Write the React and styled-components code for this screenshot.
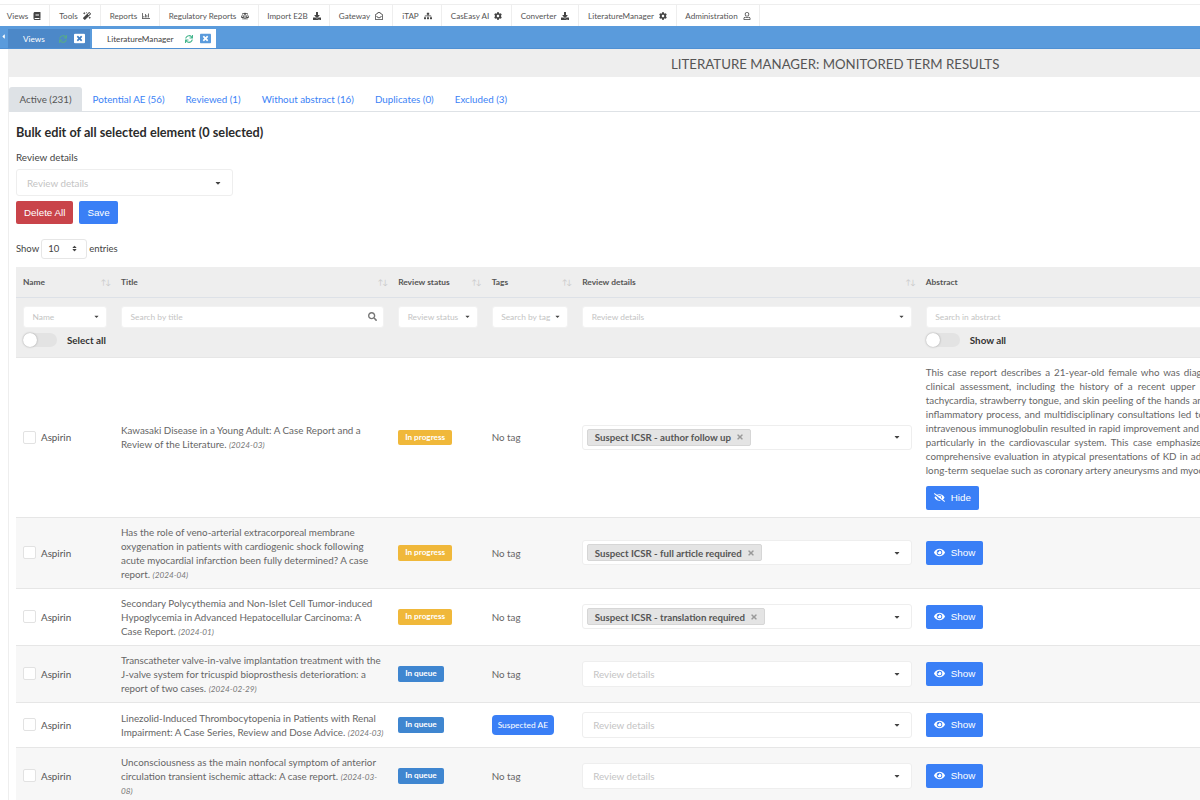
import React from "react";
import styled, { createGlobalStyle } from "styled-components";
import {
  FaBook,
  FaMagic,
  FaRegChartBar,
  FaBalanceScale,
  FaDownload,
  FaRegEnvelopeOpen,
  FaSitemap,
  FaCog,
  FaRegUser,
  FaSync,
  FaWindowClose,
  FaCaretDown,
  FaCaretLeft,
  FaSort,
  FaSearch,
  FaEye,
  FaEyeSlash,
  FaTimes,
} from "react-icons/fa";

const navItems = [
  { label: "Views", Icon: FaBook, width: 50 },
  { label: "Tools", Icon: FaMagic, width: 51 },
  { label: "Reports", Icon: FaRegChartBar, width: 59 },
  { label: "Regulatory Reports", Icon: FaBalanceScale, width: 99 },
  { label: "Import E2B", Icon: FaDownload, width: 71 },
  { label: "Gateway", Icon: FaRegEnvelopeOpen, width: 63 },
  { label: "iTAP", Icon: FaSitemap, width: 49 },
  { label: "CasEasy AI", Icon: FaCog, width: 70 },
  { label: "Converter", Icon: FaDownload, width: 67 },
  { label: "LiteratureManager", Icon: FaCog, width: 98 },
  { label: "Administration", Icon: FaRegUser, width: 83 },
];

const tabs = [
  { label: "Active (231)", active: true },
  { label: "Potential AE (56)" },
  { label: "Reviewed (1)" },
  { label: "Without abstract (16)" },
  { label: "Duplicates (0)" },
  { label: "Excluded (3)" },
];

const columns = [
  { label: "Name", width: 98, sort: true },
  { label: "Title", width: 277, sort: true },
  { label: "Review status", width: 93.5, sort: true },
  { label: "Tags", width: 90.5, sort: true },
  { label: "Review details", width: 343.5, sort: true },
  { label: "Abstract", width: 520 },
];

// the source text is justified, the spread is the extra word spacing of each line
const abstractLines = [
  { text: "This case report describes a 21-year-old female who was diagnosed with Kawasaki disease", spread: 1.4 },
  { text: "clinical assessment, including the history of a recent upper respiratory tract infection", spread: 2.6 },
  { text: "tachycardia, strawberry tongue, and skin peeling of the hands and feet. Laboratory tests", spread: 0.2 },
  { text: "inflammatory process, and multidisciplinary consultations led to the diagnosis. Aspirin and", spread: 1.1 },
  { text: "intravenous immunoglobulin resulted in rapid improvement and no lasting complications,", spread: 0.3 },
  { text: "particularly in the cardiovascular system. This case emphasizes the importance of a", spread: 1.9 },
  { text: "comprehensive evaluation in atypical presentations of KD in adults, to help prevent", spread: 0.7 },
  { text: "long-term sequelae such as coronary artery aneurysms and myocardial infarction.", spread: 0 },
];

const rows = [
  {
    title: "Kawasaki Disease in a Young Adult: A Case Report and a Review of the Literature.",
    date: "(2024-03)",
    status: "progress",
    detail: "Suspect ICSR - author follow up",
    open: true,
  },
  {
    title:
      "Has the role of veno-arterial extracorporeal membrane oxygenation in patients with cardiogenic shock following acute myocardial infarction been fully determined? A case report.",
    date: "(2024-04)",
    status: "progress",
    detail: "Suspect ICSR - full article required",
  },
  {
    title:
      "Secondary Polycythemia and Non-Islet Cell Tumor-induced Hypoglycemia in Advanced Hepatocellular Carcinoma: A Case Report.",
    date: "(2024-01)",
    status: "progress",
    detail: "Suspect ICSR - translation required",
  },
  {
    title:
      "Transcatheter valve-in-valve implantation treatment with the J-valve system for tricuspid bioprosthesis deterioration: a report of two cases.",
    date: "(2024-02-29)",
    status: "queue",
  },
  {
    title:
      "Linezolid-Induced Thrombocytopenia in Patients with Renal Impairment: A Case Series, Review and Dose Advice.",
    date: "(2024-03)",
    status: "queue",
    tag: "Suspected AE",
  },
  {
    title:
      "Unconsciousness as the main nonfocal symptom of anterior circulation transient ischemic attack: A case report.",
    date: "(2024-03-08)",
    status: "queue",
  },
];

function App() {
  return (
    <>
      <GlobalStyle />
      <Page>
        <TopNav>
          {navItems.map(({ label, Icon, width }) => (
            <NavItem key={label} $width={width}>
              {label}
              <Icon />
            </NavItem>
          ))}
        </TopNav>
        <TabBar>
          <Collapse>
            <FaCaretLeft />
          </Collapse>
          <WindowTab>
            Views
            <SyncIcon $dim />
            <CloseIcon $light />
          </WindowTab>
          <WindowTab $active>
            LiteratureManager
            <SyncIcon />
            <CloseIcon />
          </WindowTab>
        </TabBar>
        <Content>
          <TitleBand>LITERATURE MANAGER: MONITORED TERM RESULTS</TitleBand>
          <Tabs>
            {tabs.map((tab) => (
              <Tab key={tab.label} $active={tab.active}>
                {tab.label}
              </Tab>
            ))}
          </Tabs>
          <Body>
            <BulkTitle>Bulk edit of all selected element (0 selected)</BulkTitle>
            <FieldLabel>Review details</FieldLabel>
            <BulkSelect>
              Review details
              <FaCaretDown />
            </BulkSelect>
            <ButtonRow>
              <FormButton $danger>Delete All</FormButton>
              <FormButton>Save</FormButton>
            </ButtonRow>
            <EntriesRow>
              Show
              <EntriesSelect>
                10
                <FaSort />
              </EntriesSelect>
              entries
            </EntriesRow>
            <ResultsTable>
              <colgroup>
                {columns.map((col) => (
                  <col key={col.label} style={{ width: col.width }} />
                ))}
              </colgroup>
              <thead>
                <tr>
                  {columns.map((col) => (
                    <HeadCell key={col.label}>
                      {col.label}
                      {col.sort && <SortArrows>↑↓</SortArrows>}
                    </HeadCell>
                  ))}
                </tr>
                <tr>
                  <FilterCell>
                    <FilterBox>
                      Name
                      <FaCaretDown />
                    </FilterBox>
                    <ToggleRow>
                      <Toggle />
                      Select all
                    </ToggleRow>
                  </FilterCell>
                  <FilterCell>
                    <FilterBox $search>
                      Search by title
                      <FaSearch />
                    </FilterBox>
                  </FilterCell>
                  <FilterCell>
                    <FilterBox>
                      Review status
                      <FaCaretDown />
                    </FilterBox>
                  </FilterCell>
                  <FilterCell>
                    <FilterBox>
                      Search by tag
                      <FaCaretDown />
                    </FilterBox>
                  </FilterCell>
                  <FilterCell>
                    <FilterBox>
                      Review details
                      <FaCaretDown />
                    </FilterBox>
                  </FilterCell>
                  <FilterCell>
                    <FilterBox>Search in abstract</FilterBox>
                    <ToggleRow>
                      <Toggle />
                      Show all
                    </ToggleRow>
                  </FilterCell>
                </tr>
              </thead>
              <tbody>
                {rows.map((row, index) => (
                  <Row key={row.title} $shaded={index % 2 === 1}>
                    <Cell>
                      <NameWrap>
                        <Check />
                        Aspirin
                      </NameWrap>
                    </Cell>
                    <Cell>
                      {row.title} <DateText>{row.date}</DateText>
                    </Cell>
                    <Cell>
                      <StatusBadge $status={row.status}>
                        {row.status === "progress" ? "In progress" : "In queue"}
                      </StatusBadge>
                    </Cell>
                    <Cell>{row.tag ? <TagBadge>{row.tag}</TagBadge> : <NoTag>No tag</NoTag>}</Cell>
                    <Cell>
                      <DetailSelect $filled={!!row.detail}>
                        {row.detail ? (
                          <Chip>
                            {row.detail}
                            <FaTimes />
                          </Chip>
                        ) : (
                          "Review details"
                        )}
                        <FaCaretDown />
                      </DetailSelect>
                    </Cell>
                    <Cell>
                      {row.open && (
                        <AbstractText>
                          {abstractLines.map((line) => (
                            <AbstractLine key={line.text} $spread={line.spread}>
                              {line.text}
                            </AbstractLine>
                          ))}
                        </AbstractText>
                      )}
                      <EyeButton>
                        {row.open ? <FaEyeSlash /> : <FaEye />}
                        {row.open ? "Hide" : "Show"}
                      </EyeButton>
                    </Cell>
                  </Row>
                ))}
              </tbody>
            </ResultsTable>
          </Body>
        </Content>
      </Page>
    </>
  );
}

const GlobalStyle = createGlobalStyle`
  html, body {
    margin: 0;
    height: 100%;
    overflow: hidden;
    background: #fff;
  }
  body {
    font-family: Lato, "Open Sans", sans-serif;
    color: #555;
  }
  * {
    box-sizing: border-box;
  }
`;

const Page = styled.div`
  width: 1200px;
  height: 800px;
  overflow: hidden;
  padding-top: 4px;
`;

const TopNav = styled.nav`
  display: flex;
  height: 22px;
  border-top: 1px solid #eee;
`;

const NavItem = styled.div`
  display: flex;
  align-items: center;
  justify-content: center;
  gap: 5px;
  width: ${(p) => p.$width}px;
  border-right: 1px solid #eee;
  font-size: 8.1px;
  color: #555;
  white-space: nowrap;

  &:first-child {
    padding-right: 1px;
  }

  svg {
    font-size: 8px;
    color: #444;
  }
`;

const TabBar = styled.div`
  display: flex;
  align-items: flex-end;
  gap: 2px;
  height: 23px;
  padding-left: 8px;
  background: #5a9bdc;
  border-bottom: 1px solid #4f90d3;
  position: relative;
`;

const Collapse = styled.span`
  position: absolute;
  left: 0;
  top: 7px;
  font-size: 7px;
  color: #fff;
`;

const WindowTab = styled.div`
  display: flex;
  align-items: center;
  height: 19px;
  width: ${(p) => (p.$active ? 124 : 82)}px;
  padding-left: 15px;
  background: ${(p) => (p.$active ? "#fff" : "#4c88c8")};
  color: ${(p) => (p.$active ? "#444" : "#fff")};
  font-size: 8.2px;
`;

const SyncIcon = styled(FaSync)`
  margin-left: ${(p) => (p.$dim ? 14 : 11)}px;
  font-size: 8px;
  color: ${(p) => (p.$dim ? "#57a98c" : "#43b58c")};
`;

const CloseIcon = styled(FaWindowClose)`
  margin-left: 7px;
  font-size: 11px;
  color: ${(p) => (p.$light ? "#fff" : "#5a9bdc")};
  background: ${(p) => (p.$light ? "#3f7fc4" : "#fff")};
`;

const Content = styled.main`
  margin-left: 8px;
  border-left: 1px solid #eee;
`;

const TitleBand = styled.div`
  height: 28px;
  padding: 1px 0 0 662px;
  background: #eee;
  font-size: 13.25px;
  line-height: 28px;
  color: #555;
  white-space: nowrap;
`;

const Tabs = styled.div`
  display: flex;
  height: 25px;
  margin-top: 10px;
  border-bottom: 1px solid #dee2e6;
`;

const Tab = styled.div`
  display: flex;
  align-items: center;
  height: 24px;
  padding: 0 10.5px;
  border-radius: 3px 3px 0 0;
  background: ${(p) => (p.$active ? "#dee2e6" : "transparent")};
  color: ${(p) => (p.$active ? "#555" : "#3b82f6")};
  font-size: 9.8px;
  white-space: nowrap;
`;

const Body = styled.section`
  padding: 12px 0 0 7px;
`;

const BulkTitle = styled.h2`
  margin: 0;
  font-size: 12.7px;
  line-height: 16px;
  font-weight: 700;
  color: #2b2b2b;
`;

const FieldLabel = styled.div`
  margin-top: 10px;
  font-size: 9.9px;
  line-height: 14px;
  color: #444;
`;

const BaseSelect = styled.div`
  display: flex;
  align-items: center;
  justify-content: space-between;
  background: #fff;
  border: 1px solid #eee;
  border-radius: 3px;
  color: #c4c4c4;
  white-space: nowrap;

  svg {
    color: #444;
    font-size: 8px;
    flex: none;
  }
`;

const BulkSelect = styled(BaseSelect)`
  width: 217px;
  height: 27px;
  margin-top: 5px;
  padding: 0 10px;
  font-size: 9.8px;
`;

const ButtonRow = styled.div`
  display: flex;
  gap: 6px;
  margin-top: 5px;
`;

const FormButton = styled.div`
  display: flex;
  align-items: center;
  height: 23px;
  padding: 0 8px;
  border-radius: 2px;
  background: ${(p) => (p.$danger ? "#c9444a" : "#3a7ff6")};
  color: #fff;
  font-family: "Liberation Sans", Arial, sans-serif;
  font-size: 9.8px;
`;

const EntriesRow = styled.div`
  display: flex;
  align-items: center;
  gap: 2px;
  margin-top: 15px;
  height: 20px;
  padding-bottom: 1px;
  font-size: 9.5px;
  color: #444;
`;

const EntriesSelect = styled.div`
  display: flex;
  align-items: center;
  justify-content: space-between;
  width: 46px;
  height: 20px;
  padding: 0 8px 0 6px;
  border: 1px solid #e6e6e6;
  border-radius: 3px;

  svg {
    font-size: 7px;
    color: #444;
  }
`;

const ResultsTable = styled.table`
  table-layout: fixed;
  width: 1423px;
  margin-top: 8px;
  border-collapse: collapse;
  font-size: 9.8px;
  line-height: 14px;
`;

const HeadCell = styled.th`
  position: relative;
  height: 30px;
  padding: 0 7px;
  background: #eee;
  border-bottom: 1px solid #dde1e7;
  text-align: left;
  font-size: 8.4px;
  font-weight: 700;
  color: #555;
`;

const SortArrows = styled.span`
  position: absolute;
  right: 4px;
  top: 9px;
  font-weight: 400;
  font-size: 7.5px;
  color: #c8c8c8;
  letter-spacing: -1px;
`;

const FilterCell = styled.th`
  height: 60px;
  padding: 8px 7px 0;
  background: #eee;
  vertical-align: top;
  text-align: left;
  font-weight: 400;
`;

const FilterBox = styled(BaseSelect)`
  height: 22px;
  padding: 0 6px 0 8.5px;
  font-size: 8.4px;
  border-color: #f2f2f2;

  svg {
    font-size: ${(p) => (p.$search ? 9 : 7)}px;
    color: ${(p) => (p.$search ? "#777" : "#444")};
  }
`;

const ToggleRow = styled.div`
  display: flex;
  align-items: center;
  gap: 10px;
  margin-top: 5px;
  font-size: 9.8px;
  font-weight: 700;
  color: #333;
  white-space: nowrap;
`;

const Toggle = styled.span`
  position: relative;
  flex: none;
  width: 34px;
  height: 14px;
  border-radius: 7px;
  background: #e3e3e3;

  &::after {
    content: "";
    position: absolute;
    left: 0;
    top: 0;
    width: 14px;
    height: 14px;
    border-radius: 50%;
    background: #fff;
    box-shadow: 0 0 2px rgba(0, 0, 0, 0.35);
  }
`;

const Row = styled.tr`
  background: ${(p) => (p.$shaded ? "#f7f7f7" : "#fff")};
  border-top: 1px solid #e6e6e6;
`;

const Cell = styled.td`
  padding: 7px;
  vertical-align: middle;
  color: #666;
`;

const NameWrap = styled.div`
  display: flex;
  align-items: center;
  gap: 5px;
  color: #555;
`;

const Check = styled.span`
  flex: none;
  width: 13px;
  height: 13px;
  border: 1px solid #e2e2e2;
  border-radius: 2px;
  background: #fff;
`;

const DateText = styled.em`
  font-size: 8.2px;
  line-height: 1;
  color: #777;
`;

const StatusBadge = styled.span`
  display: inline-block;
  padding: 0 7px;
  height: 15.5px;
  line-height: 15.5px;
  border-radius: 2px;
  background: ${(p) => (p.$status === "progress" ? "#f0b83a" : "#3f86d0")};
  color: #fff;
  font-size: 8.2px;
  font-weight: 700;
  white-space: nowrap;
  vertical-align: middle;
`;

const TagBadge = styled.span`
  display: inline-block;
  height: 20px;
  padding: 0 6px;
  line-height: 20px;
  border-radius: 4px;
  background: #3a7ff6;
  color: #fff;
  font-size: 8.4px;
  white-space: nowrap;
  vertical-align: middle;
`;

const NoTag = styled.span`
  color: #666;
`;

const DetailSelect = styled(BaseSelect)`
  height: ${(p) => (p.$filled ? 25 : 26)}px;
  margin: 2px 0;
  padding: 0 10px 0 ${(p) => (p.$filled ? 4 : 10)}px;
  font-size: 9.8px;
`;

const Chip = styled.span`
  display: inline-flex;
  align-items: center;
  gap: 5px;
  height: 17px;
  padding: 0 6.5px;
  border: 1px solid #d6d6d6;
  border-radius: 2px;
  background: #e4e4e4;
  color: #555;
  font-weight: 700;
  font-size: 9.7px;

  svg {
    font-size: 8px;
    color: #999;
  }
`;

const AbstractText = styled.div`
  margin-bottom: 8.5px;
  line-height: 14.1px;
  color: #666;
`;

const AbstractLine = styled.div`
  white-space: nowrap;
  word-spacing: ${(p) => p.$spread}px;
`;

const EyeButton = styled.div`
  display: inline-flex;
  align-items: center;
  gap: 6px;
  height: 24px;
  padding: 0 8px;
  border-radius: 2px;
  background: #3a7ff6;
  color: #fff;
  font-family: "Liberation Sans", Arial, sans-serif;
  font-size: 9.8px;
  vertical-align: middle;

  svg {
    font-size: 11px;
  }
`;

export default App;
